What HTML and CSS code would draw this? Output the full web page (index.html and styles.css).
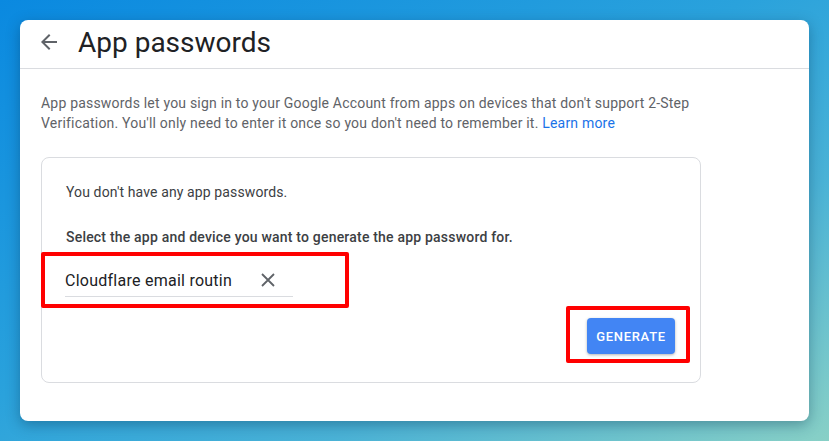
FILE: index.html
```html
<!doctype html>
<html>
<head>
<meta charset="utf-8">
<title>App passwords</title>
<link rel="stylesheet" href="styles.css">
</head>
<body>
<div class="card">
	<div class="header">
		<span class="back">
			<svg width="24" height="24" viewBox="0 0 24 24"><path d="M20 11H7.83l5.59-5.59L12 4l-8 8 8 8 1.41-1.41L7.83 13H20v-2z" fill="#5f6368"/></svg>
		</span>
		<h1>App passwords</h1>
	</div>
	<div class="content">
		<p class="desc">App passwords let you sign in to your Google Account from apps on devices that don't support 2-Step Verification. You'll only need to enter it once so you don't need to remember it. <a href="#">Learn more</a></p>
		<div class="box">
			<p class="empty">You don't have any app passwords.</p>
			<p class="select">Select the app and device you want to generate the app password for.</p>
			<div class="mark field_mark">
				<div class="field">
					<span class="value">Cloudflare email routin</span>
					<svg class="clear" width="14" height="14" viewBox="0 0 14 14"><path d="M1 1L13 13M13 1L1 13" stroke="#5f6368" stroke-width="1.8" fill="none"/></svg>
				</div>
			</div>
			<div class="actions">
				<div class="mark btn_mark">
					<button class="btn">GENERATE</button>
				</div>
			</div>
		</div>
	</div>
</div>
</body>
</html>
```

FILE: styles.css
```css
*{
	margin:0;
	padding:0;
	box-sizing:border-box;
}
html,body{
	height:100%;
}
body{
	padding:20px;
	font-family:Roboto,"Liberation Sans",Arial,sans-serif;
	background:linear-gradient(to bottom right,#0a89e0 0%,#2aa2dc 45%,#4ab2d6 70%,#88d0c6 100%);
	overflow:hidden;
}
.card{
	width:789px;
	height:401px;
	background:#fff;
	border-radius:8px;
	box-shadow:0 4px 14px rgba(0,40,70,.35);
}
.header{
	height:49px;
	display:flex;
	align-items:center;
	padding-left:17px;
	border-bottom:1px solid #dadce0;
}
.back{
	display:flex;
	width:24px;
	height:24px;
	margin-top:-4px;
}
.header h1{
	margin-left:17px;
	margin-top:-4px;
	font-size:28px;
	font-weight:400;
	color:#202124;
}
.content{
	padding:24px 108px 0 21px;
}
.desc{
	font-size:14px;
	line-height:20px;
	color:#5f6368;
	letter-spacing:.2px;
}
.desc a{
	color:#1a73e8;
	text-decoration:none;
}
.box{
	margin-top:24px;
	width:660px;
	height:226px;
	border:1px solid #dadce0;
	border-radius:8px;
	padding:24px 24px 0 24px;
}
.empty{
	font-size:14px;
	line-height:20px;
	color:#3c4043;
	letter-spacing:.12px;
}
.select{
	margin-top:25px;
	font-size:14px;
	line-height:20px;
	font-weight:500;
	color:#3c4043;
	letter-spacing:.2px;
}
.mark{
	border:4px solid #f00;
	border-radius:2px;
}
.field_mark{
	margin:5px 0 0 -25px;
	width:308px;
	height:56px;
	padding:0 0 0 20px;
}
.field{
	width:228px;
	height:41px;
	display:flex;
	align-items:center;
	justify-content:space-between;
	padding:8px 18px 0 0;
	border-bottom:1px solid #dadce0;
}
.value{
	font-size:16px;
	color:#202124;
	letter-spacing:.25px;
}
.clear{
	display:block;
}
.actions{
	display:flex;
	justify-content:flex-end;
	margin:-2px -14px 0 0;
}
.btn_mark{
	width:124px;
	height:57px;
	padding:8px 10px 0 17px;
}
.btn{
	width:88px;
	height:36px;
	border:0;
	border-radius:4px;
	background:#4285f4;
	color:#fff;
	font-family:Roboto,"Liberation Sans",Arial,sans-serif;
	font-size:13px;
	font-weight:500;
	letter-spacing:.7px;
	box-shadow:0 1px 3px rgba(0,0,0,.3);
}
```
